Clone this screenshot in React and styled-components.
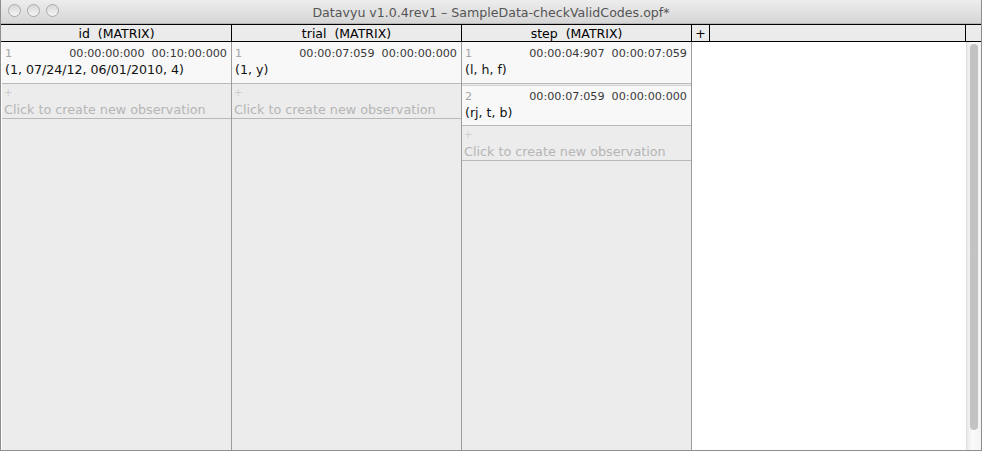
import React from 'react';
import styled, { createGlobalStyle } from 'styled-components';

const GlobalStyle = createGlobalStyle`
  html, body {
    margin: 0;
    padding: 0;
    background: #ffffff;
  }
  body {
    font-family: "DejaVu Sans", "Liberation Sans", sans-serif;
  }
`;

const Window = styled.div`
  box-sizing: border-box;
  width: 982px;
  height: 451px;
  display: flex;
  flex-direction: column;
  border: 1px solid #8e8e8e;
  border-top: none;
  overflow: hidden;
  background: #ffffff;
`;

const TitleBar = styled.div`
  position: relative;
  box-sizing: border-box;
  height: 24px;
  flex-shrink: 0;
  display: flex;
  align-items: center;
  justify-content: center;
  background: linear-gradient(#ededed, #d6d6d6);
  border-bottom: 1px solid #b4b4b4;
`;

const Lights = styled.div`
  position: absolute;
  left: 7px;
  top: 4px;
  display: flex;
  gap: 6px;
`;

const Light = styled.span`
  box-sizing: border-box;
  width: 13px;
  height: 13px;
  border-radius: 50%;
  border: 1px solid #a9a9a9;
  background: linear-gradient(#d8d8d8, #f4f4f4);
`;

const Title = styled.div`
  font-size: 12.6px;
  color: #555555;
  padding-top: 1px;
`;

const HeaderRow = styled.div`
  display: flex;
  height: 16px;
  flex-shrink: 0;
  padding-left: 1px;
  background: #ebebeb;
  border-top: 1px solid #000;
  border-bottom: 1px solid #000;
`;

const HeaderCell = styled.div`
  box-sizing: border-box;
  width: ${p => p.$w}px;
  flex: ${p => (p.$grow ? 1 : 'none')};
  border-right: ${p => (p.$last ? 'none' : '1px solid #000')};
  display: flex;
  align-items: center;
  justify-content: center;
  font-size: 12.5px;
  color: #000;
  white-space: pre;
`;

const Body = styled.div`
  flex: 1;
  display: flex;
  min-height: 0;
  padding-left: 1px;
`;

const Column = styled.div`
  box-sizing: border-box;
  width: 230px;
  flex-shrink: 0;
  background: #ececec;
  border-right: 1px solid #9c9c9c;
  display: flex;
  flex-direction: column;
`;

const Filler = styled.div`
  flex: 1;
  background: #ffffff;
`;

const Cell = styled.div`
  box-sizing: border-box;
  height: ${p => (p.$first ? 42 : 41)}px;
  padding: 4px 4px 0 3px;
  background: #f8f8f8;
  border-bottom: 1px solid #b9b9b9;
  ${p => !p.$first && 'border-top: 1px solid #d2d2d2; margin-top: 1px; padding-top: 3px;'}
`;

const CellTop = styled.div`
  display: flex;
  justify-content: space-between;
  font-size: 11.2px;
  line-height: 15px;
`;

const Ordinal = styled.span`
  color: #a6a6a6;
`;

const Times = styled.span`
  color: #383838;
  white-space: pre;
`;

const Value = styled.div`
  font-size: 12.6px;
  line-height: 18px;
  color: #111111;
`;

const NewObs = styled.div`
  box-sizing: border-box;
  height: 35px;
  padding: 0 0 0 2px;
  border-bottom: 1px solid #b9b9b9;
  color: #b5b5b5;
`;

const Plus = styled.div`
  font-size: 10px;
  line-height: 17px;
  color: #cccccc;
`;

const NewLabel = styled.div`
  font-size: 12.75px;
  line-height: 17px;
  white-space: nowrap;
`;

const ScrollTrack = styled.div`
  box-sizing: border-box;
  width: 15px;
  flex-shrink: 0;
  padding: 2px 3px 20px 3px;
  background: linear-gradient(90deg, #eaeaea, #fafafa 40%, #f3f3f3);
  border-left: 1px solid #dedede;
`;

const ScrollThumb = styled.div`
  height: 100%;
  border-radius: 5px;
  background: #c3c3c3;
`;

const columns = [
  {
    name: 'id',
    cells: [{ n: 1, on: '00:00:00:000', off: '00:10:00:000', v: '(1, 07/24/12, 06/01/2010, 4)' }],
  },
  {
    name: 'trial',
    cells: [{ n: 1, on: '00:00:07:059', off: '00:00:00:000', v: '(1, y)' }],
  },
  {
    name: 'step',
    cells: [
      { n: 1, on: '00:00:04:907', off: '00:00:07:059', v: '(l, h, f)' },
      { n: 2, on: '00:00:07:059', off: '00:00:00:000', v: '(rj, t, b)' },
    ],
  },
];

const App = () => (
  <Window>
    <GlobalStyle />
    <TitleBar>
      <Lights>
        <Light />
        <Light />
        <Light />
      </Lights>
      <Title>Datavyu v1.0.4rev1 – SampleData-checkValidCodes.opf*</Title>
    </TitleBar>
    <HeaderRow>
      {columns.map(c => (
        <HeaderCell key={c.name} $w={230}>{`${c.name}  (MATRIX)`}</HeaderCell>
      ))}
      <HeaderCell $w={18}>+</HeaderCell>
      <HeaderCell $grow />
      <HeaderCell $w={15} $last />
    </HeaderRow>
    <Body>
      {columns.map(c => (
        <Column key={c.name}>
          {c.cells.map((cell, i) => (
            <Cell key={cell.n} $first={i === 0}>
              <CellTop>
                <Ordinal>{cell.n}</Ordinal>
                <Times>{`${cell.on}  ${cell.off}`}</Times>
              </CellTop>
              <Value>{cell.v}</Value>
            </Cell>
          ))}
          <NewObs>
            <Plus>+</Plus>
            <NewLabel>Click to create new observation</NewLabel>
          </NewObs>
        </Column>
      ))}
      <Filler />
      <ScrollTrack>
        <ScrollThumb />
      </ScrollTrack>
    </Body>
  </Window>
);

export default App;
